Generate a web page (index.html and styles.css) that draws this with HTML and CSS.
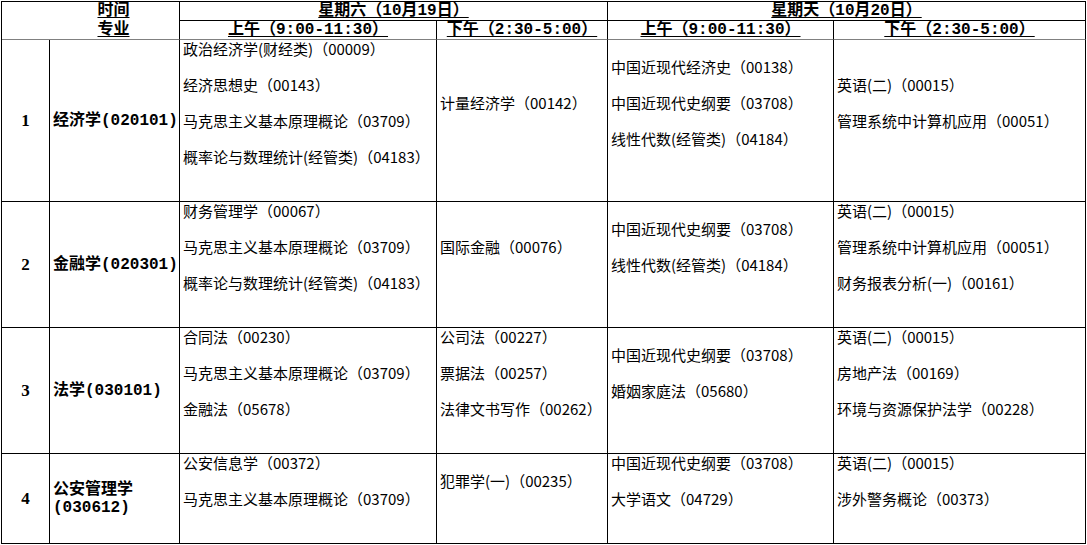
FILE: index.html
```html
<!DOCTYPE html>
<html lang="zh-CN">
<head>
<meta charset="utf-8">
<title>考试安排</title>
<link rel="stylesheet" href="styles.css">
</head>
<body>
<div class="sheet">
  <div class="cell corner"><span class="ul">时间</span><br><span class="ul">专业</span></div>
  <div class="cell day sat"><span class="ul">星期六（10月19日）</span></div>
  <div class="cell day sun"><span class="ul">星期天（10月20日）</span></div>
  <div class="cell half"><span class="ul">上午（9:00-11:30）</span></div>
  <div class="cell half"><span class="ul">下午（2:30-5:00）</span></div>
  <div class="cell half"><span class="ul">上午（9:00-11:30）</span></div>
  <div class="cell half"><span class="ul">下午（2:30-5:00）</span></div>

  <div class="cell num">1</div>
  <div class="cell major">经济学(020101)</div>
  <div class="cell list">
    <div class="item">政治经济学(财经类)（00009）</div>
    <div class="item">经济思想史（00143）</div>
    <div class="item">马克思主义基本原理概论（03709）</div>
    <div class="item">概率论与数理统计(经管类)（04183）</div>
  </div>
  <div class="cell list">
    <div class="item">计量经济学（00142）</div>
  </div>
  <div class="cell list">
    <div class="item">中国近现代经济史（00138）</div>
    <div class="item">中国近现代史纲要（03708）</div>
    <div class="item">线性代数(经管类)（04184）</div>
  </div>
  <div class="cell list">
    <div class="item">英语(二)（00015）</div>
    <div class="item">管理系统中计算机应用（00051）</div>
  </div>

  <div class="cell num">2</div>
  <div class="cell major">金融学(020301)</div>
  <div class="cell list">
    <div class="item">财务管理学（00067）</div>
    <div class="item">马克思主义基本原理概论（03709）</div>
    <div class="item">概率论与数理统计(经管类)（04183）</div>
  </div>
  <div class="cell list">
    <div class="item">国际金融（00076）</div>
  </div>
  <div class="cell list">
    <div class="item">中国近现代史纲要（03708）</div>
    <div class="item">线性代数(经管类)（04184）</div>
  </div>
  <div class="cell list">
    <div class="item">英语(二)（00015）</div>
    <div class="item">管理系统中计算机应用（00051）</div>
    <div class="item">财务报表分析(一)（00161）</div>
  </div>

  <div class="cell num">3</div>
  <div class="cell major">法学(030101)</div>
  <div class="cell list">
    <div class="item">合同法（00230）</div>
    <div class="item">马克思主义基本原理概论（03709）</div>
    <div class="item">金融法（05678）</div>
  </div>
  <div class="cell list">
    <div class="item">公司法（00227）</div>
    <div class="item">票据法（00257）</div>
    <div class="item">法律文书写作（00262）</div>
  </div>
  <div class="cell list">
    <div class="item">中国近现代史纲要（03708）</div>
    <div class="item">婚姻家庭法（05680）</div>
  </div>
  <div class="cell list">
    <div class="item">英语(二)（00015）</div>
    <div class="item">房地产法（00169）</div>
    <div class="item">环境与资源保护法学（00228）</div>
  </div>

  <div class="cell num">4</div>
  <div class="cell major">公安管理学<br>(030612)</div>
  <div class="cell list">
    <div class="item">公安信息学（00372）</div>
    <div class="item">马克思主义基本原理概论（03709）</div>
  </div>
  <div class="cell list">
    <div class="item">犯罪学(一)（00235）</div>
  </div>
  <div class="cell list">
    <div class="item">中国近现代史纲要（03708）</div>
    <div class="item">大学语文（04729）</div>
  </div>
  <div class="cell list">
    <div class="item">英语(二)（00015）</div>
    <div class="item">涉外警务概论（00373）</div>
  </div>
</div>
</body>
</html>
```

FILE: styles.css
```css
html, body {
  margin: 0;
  padding: 0;
  background: #fff;
}

body {
  color: #000;
  font-family: "Noto Sans CJK SC", sans-serif;
  font-size: 15px;
}

.sheet {
  display: grid;
  grid-template-columns: 48px 130px 257px 171px 226px 252px;
  grid-template-rows: 19px 19px 162px 126px 126px 90px;
  margin: 1px 0 0 1px;
  width: 1085px;
  box-sizing: border-box;
  border-left: 1px solid #000;
  border-top: 1px solid #000;
}

.cell {
  box-sizing: border-box;
  border-right: 1px solid #000;
  border-bottom: 1px solid #000;
  white-space: nowrap;
}

.corner {
  grid-column: 1 / 3;
  grid-row: 1 / 3;
  border-bottom-color: #808080;
  padding-left: 46px;
  text-align: center;
  font-family: "Liberation Mono", "Noto Sans CJK SC", monospace;
  font-weight: bold;
  font-size: 16px;
  line-height: 19px;
}

.day,
.half {
  text-align: center;
  font-family: "Liberation Mono", "Noto Sans CJK SC", monospace;
  font-weight: bold;
  font-size: 16px;
  line-height: 18px;
}

.sat { grid-column: 3 / 5; }
.sun { grid-column: 5 / 7; }

.half {
  border-bottom-color: #808080;
}

.ul {
  text-decoration: underline;
  text-decoration-thickness: 1px;
  text-underline-offset: 2px;
}

.num {
  display: flex;
  align-items: center;
  justify-content: center;
  font-family: "Liberation Serif", serif;
  font-weight: bold;
  font-size: 17px;
}

.major {
  display: flex;
  align-items: center;
  padding-left: 3px;
  font-family: "Liberation Mono", "Noto Sans CJK SC", monospace;
  font-weight: bold;
  font-size: 16px;
  line-height: 18px;
}

.list {
  display: flex;
  flex-direction: column;
  justify-content: center;
  gap: 18px;
  padding: 0 2px 36px 3px;
  line-height: 18px;
}

.item {
  height: 18px;
}
```
